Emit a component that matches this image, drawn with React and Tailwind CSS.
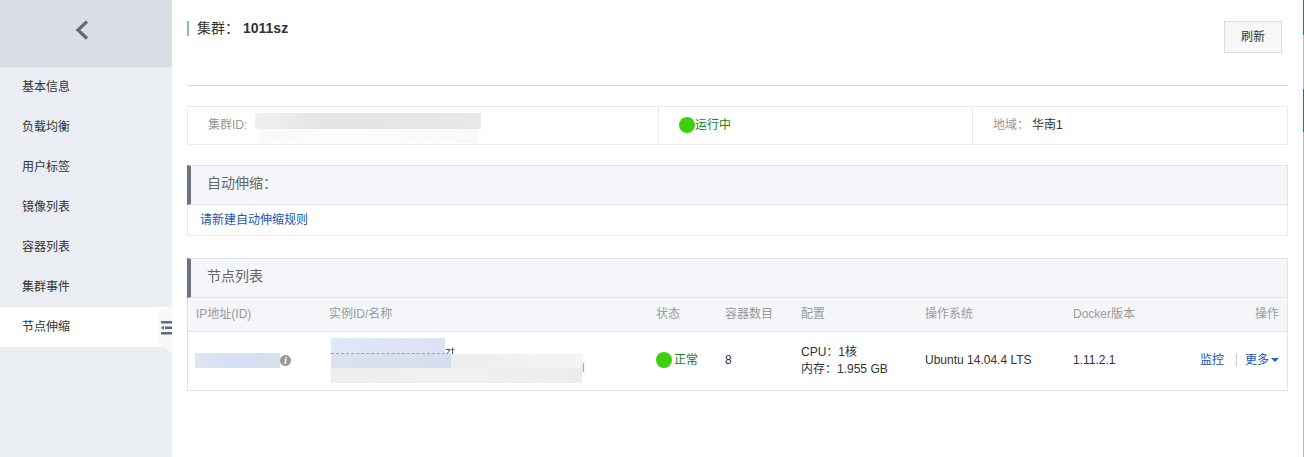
import { useState } from "react";

const menuItems = ["基本信息", "负载均衡", "用户标签", "镜像列表", "容器列表", "集群事件", "节点伸缩"];

const nodes = [
  { id: 1, status: "正常", containers: 8, cpu: "1核", memory: "1.955 GB", os: "Ubuntu 14.04.4 LTS", docker: "1.11.2.1" },
];

function StatusDot() {
  return <span className="inline-block size-4 shrink-0 rounded-full bg-[#3ecf0e]" />;
}

function SectionTitle({ children }) {
  return (
    <h2 className="border-y border-r border-l-4 border-[#e1e4e9] border-l-[#6d7580] bg-[#f5f6fa] pb-1 pl-4 text-sm leading-[34px] text-[#666]">
      {children}
    </h2>
  );
}

function Sidebar() {
  const [active, setActive] = useState("节点伸缩");

  return (
    <aside className="relative w-[172px] shrink-0 bg-[#eaedf1]">
      <button
        type="button"
        aria-label="返回"
        className="flex h-[67px] w-full items-center justify-center border-b border-[#d3d9df] bg-[#d9dee6] pr-2 pb-1.5"
      >
        <svg width="14" height="20" viewBox="0 0 14 20" fill="none" stroke="#5f6a7d" strokeWidth="3.2">
          <path d="M12 1.500 3 10l9 8.500" />
        </svg>
      </button>
      <nav>
        {menuItems.map((item) => (
          <a
            key={item}
            href="#"
            onClick={() => setActive(item)}
            className={`block h-10 pl-[22px] leading-10 ${active === item ? "bg-white" : ""}`}
          >
            {item}
          </a>
        ))}
      </nav>
      {/* collapse handle, sits over the right edge of the menu */}
      <button type="button" aria-label="收起菜单" className="absolute top-[304px] right-0 h-[62px] w-[13px]">
        <svg width="13" height="62" viewBox="0 0 13 62">
          <path d="M13 0 0 8v31l13 11z" fill="#f7f8fa" />
          <path d="M2 17h11v2.500H2zM6 22.500h7v2.500H6zM2 28h11v2.500H2zM5 21.500v4.500L2 23.750z" fill="#5f6a7d" />
        </svg>
      </button>
    </aside>
  );
}

function ClusterInfo() {
  return (
    <div className="mt-5 grid h-[39px] grid-cols-[3fr_2fr_2fr] border border-[#ebebeb]">
      <div className="flex items-center pb-px pl-5 text-[#999]">
        <span>集群ID:</span>
        <div className="mt-1.5 ml-2 w-[226px]">
          <div className="h-4 bg-linear-to-r from-[#efefef] from-5% via-[#e4e4e4] via-30% to-[#e8e8e8]" />
          <div className="mx-1 h-3.5 bg-linear-to-r from-[#f9f9f9] via-[#fdfdfd] via-40% to-[#f8f8f8]" />
        </div>
      </div>
      <div className="-ml-px flex items-center border-l border-[#ebebeb] pb-px pl-5 text-[#178017]">
        <StatusDot />
        运行中
      </div>
      <div className="-ml-px flex items-center border-l border-[#ebebeb] pb-px pl-5">
        <span className="mr-[3px] text-[#999]">地域：</span>
        <span>华南1</span>
      </div>
    </div>
  );
}

function InstanceName() {
  return (
    <div className="ml-0.5">
      <div className="flex h-4">
        <div className="w-[114px] border-b border-dashed border-[#8fa6d8] bg-linear-to-r from-[#dfe8f8] to-[#dde1f3]" />
        <a href="#" className="pt-1.5 leading-4 text-[#1a53b0]">zt</a>
      </div>
      <div className="flex">
        <div className="w-[251px]">
          <div className="flex h-3.5">
            <div className="w-[120px] bg-linear-to-r from-[#dce3ec] to-[#d5dcee]" />
            <div className="flex-1 bg-linear-to-r from-[#eeeeee] to-[#f4f4f4]" />
          </div>
          <div className="h-[15px] bg-linear-to-r from-[#eeeeee] via-[#f1f1f1] to-[#ececec]" />
        </div>
        <span className="pt-1.5 leading-4 text-[#999]">l</span>
      </div>
    </div>
  );
}

function NodeTable() {
  return (
    <table className="w-full table-fixed border-separate border-spacing-0 border border-t-0 border-[#e1e4e9] text-left">
      <colgroup>
        <col className="w-[133px]" />
        <col />
        <col className="w-[69px]" />
        <col className="w-[76px]" />
        <col className="w-[124px]" />
        <col className="w-[148px]" />
        <col className="w-[104px]" />
        <col className="w-[118px]" />
      </colgroup>
      <thead>
        <tr className="h-[34px] bg-[#f5f6fa] text-[#999]">
          {["IP地址(ID)", "实例ID/名称", "状态", "容器数目", "配置", "操作系统", "Docker版本"].map((title) => (
            <th key={title} className="border-b border-[#e1e4e9] px-2 pb-0.5 font-normal">{title}</th>
          ))}
          <th className="border-b border-[#e1e4e9] px-2 pb-0.5 text-right font-normal">操作</th>
        </tr>
      </thead>
      <tbody>
        {nodes.map((node) => (
          <tr key={node.id} className="h-[58px]">
            <td className="pb-0.5 pl-[7px]">
              <div className="flex items-center">
                <div className="h-[15px] w-[85px] bg-linear-to-r from-[#e0e4f2] via-[#d3e0f4] via-60% to-[#dbe1e5]" />
                <span className="size-[11px] rounded-full bg-[#999] text-center font-['Liberation_Serif',serif] text-[10px] leading-[11px] font-bold text-white italic">
                  i
                </span>
              </div>
            </td>
            <td className="pb-px pl-2"><InstanceName /></td>
            <td className="px-2 pb-0.5 text-[#178017]">
              <div className="flex items-center gap-0.5">
                <StatusDot />
                {node.status}
              </div>
            </td>
            <td className="px-2 pb-0.5">{node.containers}</td>
            <td className="px-2 pb-px leading-[17px]">
              <p>CPU：{node.cpu}</p>
              <p>内存：{node.memory}</p>
            </td>
            <td className="px-2 pb-0.5 whitespace-nowrap">{node.os}</td>
            <td className="px-2 pb-0.5">{node.docker}</td>
            <td className="px-2 pb-0.5">
              <div className="flex items-center justify-end text-[#1a53b0]">
                <a href="#">监控</a>
                <span className="mr-2 ml-3 h-3 w-px bg-[#ccc]" />
                <button type="button" className="flex items-center gap-0.5">
                  更多
                  <svg width="8" height="4" viewBox="0 0 8 4" fill="#1668c0">
                    <path d="M0 0h8L4 4z" />
                  </svg>
                </button>
              </div>
            </td>
          </tr>
        ))}
      </tbody>
    </table>
  );
}

export default function App() {
  return (
    <div className="flex min-h-screen bg-white font-['Liberation_Sans','Noto_Sans_CJK_SC',sans-serif] text-xs text-[#333]">
      <Sidebar />
      <main className="min-w-0 flex-1 px-[15px]">
        <header className="flex h-[86px] items-start justify-between border-b border-[#dddddd] pt-[21px] pr-1.5">
          <h1 className="flex items-center border-l-2 border-[#8bb4d4] pl-2 text-sm leading-[15px]">
            集群：<strong className="ml-1">1011sz</strong>
          </h1>
          <button type="button" className="h-8 w-[58px] border border-[#ddd] bg-[#f7f7f7]">刷新</button>
        </header>

        <ClusterInfo />

        <section className="mt-5">
          <SectionTitle>自动伸缩：</SectionTitle>
          <div className="border border-t-0 border-[#ebebeb] pl-3 leading-[30px]">
            <a href="#" className="text-[#1a53b0]">请新建自动伸缩规则</a>
          </div>
        </section>

        <section className="mt-[22px]">
          <SectionTitle>节点列表</SectionTitle>
          <NodeTable />
        </section>
      </main>
      {/* scroll edge */}
      <div className="flex w-px flex-col bg-[#bbb]">
        <div className="h-[35px] bg-[#1b7590]" />
        <div className="mt-[54px] h-[43px] bg-[#1b7590]" />
      </div>
    </div>
  );
}
